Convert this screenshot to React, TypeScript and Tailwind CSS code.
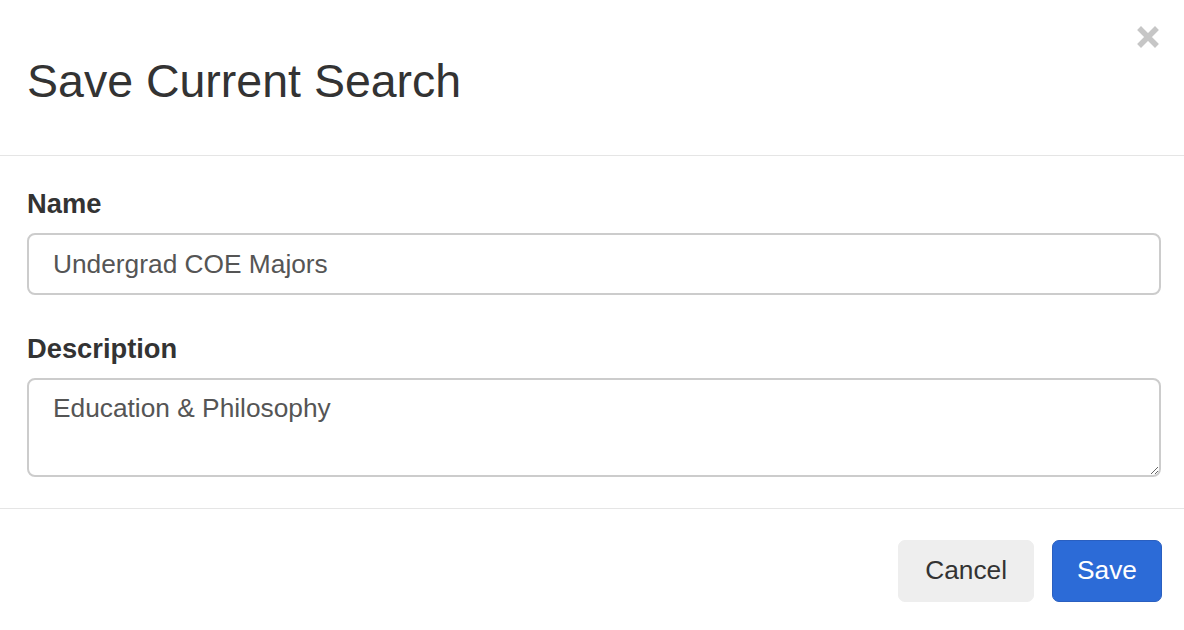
const font = { fontFamily: '"Liberation Sans", Arial, sans-serif' };

function CloseIcon() {
  return (
    <svg width="22" height="22" viewBox="0 0 22 22" aria-hidden="true">
      <path d="M4 4 L18 18 M18 4 L4 18" stroke="#c6c6c6" strokeWidth="5.5" strokeLinecap="square" />
    </svg>
  );
}

export default function App() {
  return (
    <div className="relative h-[630px] w-[1184px] bg-white text-[#333]" style={font}>
      <button
        type="button"
        aria-label="Close"
        className="absolute right-[25px] top-[26px] flex h-[22px] w-[22px] items-center justify-center"
      >
        <CloseIcon />
      </button>

      <div className="border-b border-[#e5e5e5] pb-[49px] pl-[27px] pr-[23px] pt-[56px]">
        <h4 className="text-[46.5px] leading-[50px] text-[#333]">Save Current Search</h4>
      </div>

      <form className="flex flex-col pb-[31px] pl-[27px] pr-[23px] pt-[33px]">
        <label className="mb-[14px] text-[27.3px] font-bold leading-[30px]">Name</label>
        <input
          type="text"
          defaultValue="Undergrad COE Majors"
          className="h-[62px] w-full rounded-[8px] border-2 border-[#cccccc] px-[24px] text-[26.3px] text-[#555] outline-none"
          style={font}
        />

        <label className="mb-[14px] mt-[39px] text-[27.3px] font-bold leading-[30px]">Description</label>
        <textarea
          defaultValue="Education & Philosophy"
          className="h-[99px] w-full rounded-[8px] border-2 border-[#cccccc] px-[24px] py-[10px] text-[26.3px] leading-[37px] text-[#555] outline-none"
          style={font}
        />
      </form>

      <div className="flex justify-end gap-[18px] border-t border-[#e5e5e5] pl-[27px] pr-[22px] pt-[31px]">
        <button
          type="button"
          className="h-[62px] rounded-[7px] border border-[#eeeeee] bg-[#eeeeee] px-[26px] text-[26.3px] text-[#333]"
        >
          Cancel
        </button>
        <button
          type="button"
          className="h-[62px] rounded-[7px] border border-[#2a5fc0] bg-[#2c6bd7] px-[24px] text-[26.3px] text-white"
        >
          Save
        </button>
      </div>
    </div>
  );
}
